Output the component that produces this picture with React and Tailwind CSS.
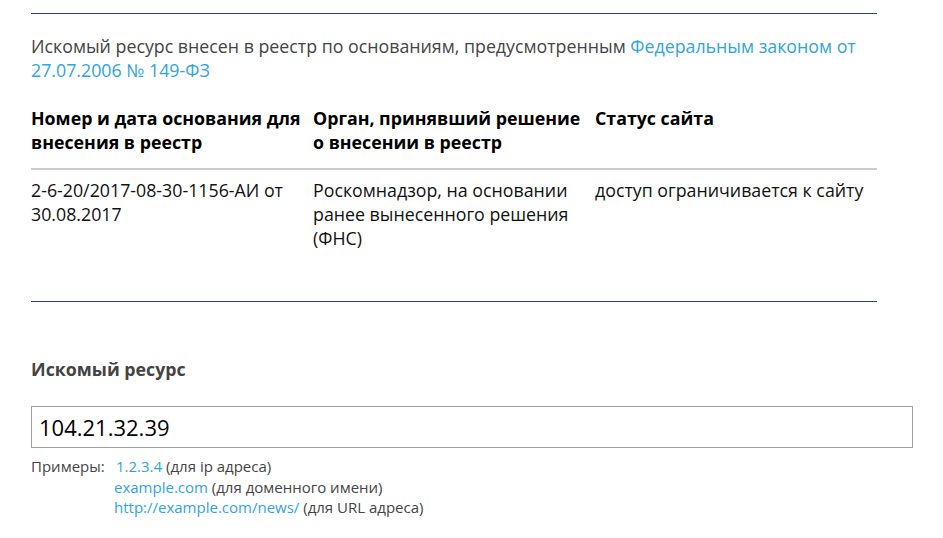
import React from 'react';

const font = { fontFamily: '"Open Sans", "Noto Sans", sans-serif' };

const columns = [
  {
    head: 'Номер и дата основания для внесения в реестр',
    body: '2-6-20/2017-08-30-1156-АИ от 30.08.2017',
  },
  {
    head: 'Орган, принявший решение о внесении в реестр',
    body: 'Роскомнадзор, на основании ранее вынесенного решения (ФНС)',
  },
  {
    head: 'Статус сайта',
    body: 'доступ ограничивается к сайту',
  },
];

const examples = [
  { link: '1.2.3.4', note: '(для ip адреса)', first: true },
  { link: 'example.com', note: '(для доменного имени)' },
  { link: 'http://example.com/news/', note: '(для URL адреса)' },
];

export default function App() {
  return (
    <div className="bg-white min-h-screen pt-[13px] pl-[31px] font-['Open_Sans',sans-serif]">
      {/* Result block */}
      <div className="w-[846px]">
        <div className="h-px bg-[#1d4a7a]" />

        <p className="mt-5 text-[17.8px] leading-6 text-[#444]">
          Искомый ресурс внесен в реестр по основаниям, предусмотренным{' '}
          <a className="text-[#2fa4e0]">Федеральным законом от 27.07.2006 № 149-ФЗ</a>
        </p>

        <div className="mt-6 grid grid-cols-3 text-[17.8px] leading-6 text-black">
          {columns.map((c) => (
            <div key={c.head} className="pr-[2px] pb-[14px] font-bold">
              {c.head}
            </div>
          ))}
          <div className="col-span-3 h-[2px] bg-[#cccccc]" />
          {columns.map((c) => (
            <div key={c.body} className="pr-[2px] pt-2 text-[#111]">
              {c.body}
            </div>
          ))}
        </div>

        <div className="mt-[51px] h-px bg-[#1d4a7a]" />
      </div>

      {/* Search form */}
      <div className="mt-[55px]">
        <h2 className="text-[17.8px] leading-6 font-bold text-[#444]">Искомый ресурс</h2>
        <input
          readOnly
          value="104.21.32.39"
          style={font}
          className="mt-[25px] block w-[882px] h-[42px] border border-[#a0a0a0] px-[7px] text-[22px] text-black outline-none"
        />
        <div className="mt-2 flex text-[15px] leading-[20.5px] text-[#444]">
          <span className="w-[83px] shrink-0">Примеры:</span>
          <div>
            {examples.map((e) => (
              <div key={e.link} className={e.first ? 'pl-[2px]' : ''}>
                <a className="text-[#2fa4e0]">{e.link}</a> {e.note}
              </div>
            ))}
          </div>
        </div>
      </div>
    </div>
  );
}
